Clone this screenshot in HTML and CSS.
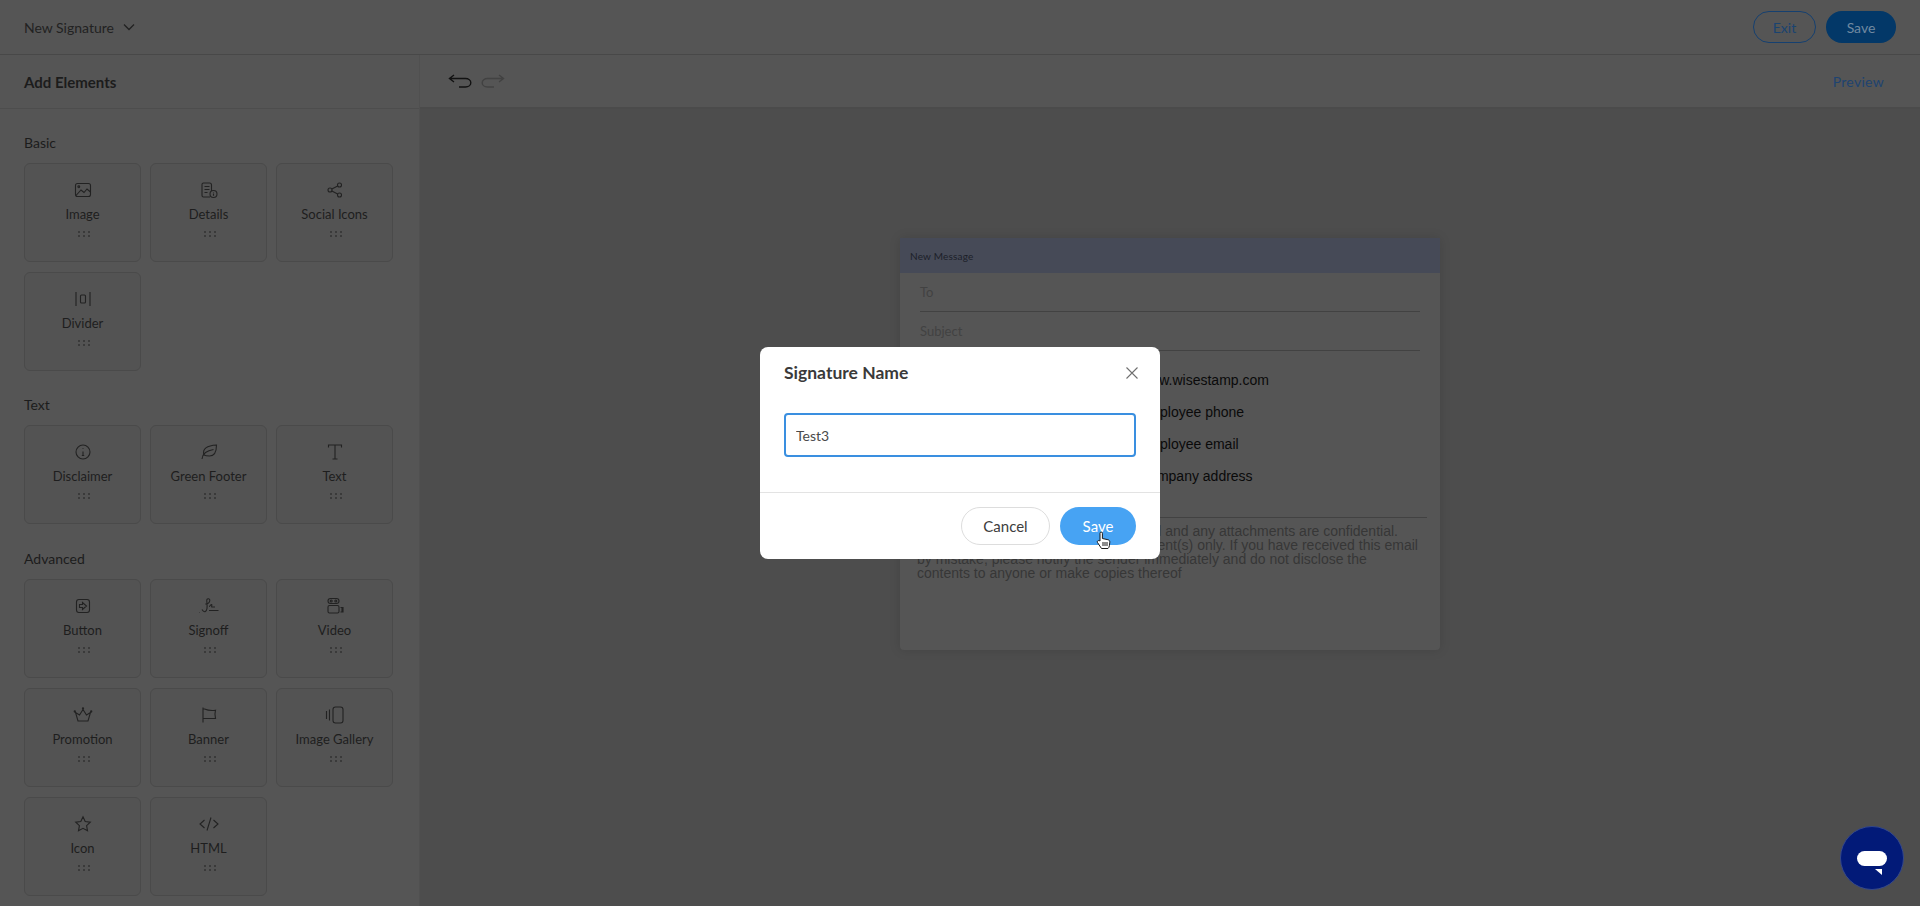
FILE: index.html
```html
<!DOCTYPE html>
<html lang="en">
<head>
  <meta charset="UTF-8" />
  <title>New Signature</title>
  <link rel="stylesheet" href="styles.css">
</head>
<body>

<svg class="defs" width="0" height="0">
  <symbol id="grip" viewBox="0 0 12 6">
    <circle cx="1" cy="1" r="0.8"/><circle cx="6" cy="1" r="0.8"/><circle cx="11" cy="1" r="0.8"/>
    <circle cx="1" cy="5" r="0.8"/><circle cx="6" cy="5" r="0.8"/><circle cx="11" cy="5" r="0.8"/>
  </symbol>
</svg>

<header class="topbar">
  <div class="doc-name">
    New Signature
    <svg width="12" height="8" viewBox="0 0 12 8"><path d="M1 1.500l5 5 5-5"/></svg>
  </div>
  <div class="top-actions">
    <button class="btn-exit">Exit</button>
    <button class="btn-save">Save</button>
  </div>
</header>

<div class="main">

  <aside class="sidebar">
    <div class="sidebar-head">Add Elements</div>

    <section class="group">
      <h3>Basic</h3>
      <div class="cards">
        <div class="card">
          <svg class="ico" viewBox="0 0 20 20"><rect x="2.500" y="3.500" width="15" height="13" rx="2"/><circle cx="5.800" cy="6.800" r="0.900"/><path d="M3 15.500l5-5.500 3 2.500 3-3.500 3.500 3"/></svg>
          <span>Image</span>
          <svg class="grip"><use href="#grip"/></svg>
        </div>
        <div class="card">
          <svg class="ico" viewBox="0 0 20 20"><path d="M11 17H4.500a1.500 1.500 0 0 1-1.500-1.500V4.500A1.500 1.500 0 0 1 4.500 3h6a2 2 0 0 1 2 2v6"/><path d="M5.500 6.500h5M5.500 9.500h5M5.500 12.500h3"/><circle cx="14.500" cy="14" r="3.500"/><path d="M14.500 13.500v2.200M14.500 12v.5"/></svg>
          <span>Details</span>
          <svg class="grip"><use href="#grip"/></svg>
        </div>
        <div class="card">
          <svg class="ico" viewBox="0 0 20 20"><circle cx="14.500" cy="5" r="2"/><circle cx="5" cy="10" r="2"/><circle cx="14.500" cy="15" r="2"/><path d="M6.800 9l5.900-3.100M6.800 11l5.900 3.100"/></svg>
          <span>Social Icons</span>
          <svg class="grip"><use href="#grip"/></svg>
        </div>
        <div class="card">
          <svg class="ico" viewBox="0 0 20 20"><path d="M3 3v14M17 3v14"/><rect x="7.500" y="6" width="5" height="8" rx="1"/></svg>
          <span>Divider</span>
          <svg class="grip"><use href="#grip"/></svg>
        </div>
      </div>
    </section>

    <section class="group">
      <h3>Text</h3>
      <div class="cards">
        <div class="card">
          <svg class="ico" viewBox="0 0 20 20"><circle cx="10" cy="10" r="7"/><path d="M10 9.500v4M8.800 13.500h2.400M10 6.300v.6"/></svg>
          <span>Disclaimer</span>
          <svg class="grip"><use href="#grip"/></svg>
        </div>
        <div class="card">
          <svg class="ico" viewBox="0 0 20 20"><path d="M3 17c.5-3 1.500-5 3.500-6.500s5-2.500 8-3"/><path d="M5 13C3 7 8 3.500 17.500 3c0 7-2.500 11-7 11-2 0-4-.2-5.500-1"/></svg>
          <span>Green Footer</span>
          <svg class="grip"><use href="#grip"/></svg>
        </div>
        <div class="card">
          <svg class="ico" viewBox="0 0 20 20"><path d="M3.500 5.500V3h13v2.500M10 3v14M7.500 17h5"/></svg>
          <span>Text</span>
          <svg class="grip"><use href="#grip"/></svg>
        </div>
      </div>
    </section>

    <section class="group group-advanced">
      <h3>Advanced</h3>
      <div class="cards">
        <div class="card">
          <svg class="ico" viewBox="0 0 20 20"><rect x="3.500" y="3.500" width="13" height="13" rx="2.500"/><path d="M6.500 8.500h3V6.500l4 3.500-4 3.500v-2h-3z"/></svg>
          <span>Button</span>
          <svg class="grip"><use href="#grip"/></svg>
        </div>
        <div class="card">
          <svg class="ico" viewBox="0 0 20 20"><path d="M.5 16.500h.4M3 13.500c2 3.500 4.500 2.500 5-1s-.5-7-.2-8.500c.3-2 3.300-1.500 3 .5-.3 2.500-2 3.500-4.500 3.500"/><path d="M10 10.500c1 0 1.500-2 2.500-2s-.5 2.500.5 2.500h3M10 14.500h9.500"/></svg>
          <span>Signoff</span>
          <svg class="grip"><use href="#grip"/></svg>
        </div>
        <div class="card">
          <svg class="ico" viewBox="0 0 20 20"><rect x="3" y="9.500" width="11" height="7.500" rx="1.500"/><rect x="3" y="2.500" width="11" height="5" rx="2.500"/><circle cx="6.200" cy="5" r="1"/><circle cx="10.800" cy="5" r="1"/><path d="M15.500 11.500h2.500v4.500h-2.500M17 11.500v4.500"/></svg>
          <span>Video</span>
          <svg class="grip"><use href="#grip"/></svg>
        </div>
        <div class="card">
          <svg class="ico" viewBox="0 0 20 20"><path d="M5 16h10l2.500-8.500L13.500 10 10 4.500 6.500 10 2.500 7.500z"/><circle cx="10" cy="3.500" r="0.600"/><circle cx="1.800" cy="6.500" r="0.600"/><circle cx="18.200" cy="6.500" r="0.600"/></svg>
          <span>Promotion</span>
          <svg class="grip"><use href="#grip"/></svg>
        </div>
        <div class="card">
          <svg class="ico" viewBox="0 0 20 20"><path d="M4 2.500v15M4 4h1.500c3 1.200 7 1.800 11 1.200-.7 2.500-.7 5.800 0 8.300H4z"/></svg>
          <span>Banner</span>
          <svg class="grip"><use href="#grip"/></svg>
        </div>
        <div class="card">
          <svg class="ico" viewBox="0 0 20 20"><rect x="8" y="2" width="10" height="16" rx="2.500"/><path d="M1.500 6v8M4.500 4.500v11"/></svg>
          <span>Image Gallery</span>
          <svg class="grip"><use href="#grip"/></svg>
        </div>
        <div class="card">
          <svg class="ico" viewBox="0 0 20 20"><path d="M10 2.800l2.200 4.700 5.100.7-3.700 3.500.9 5.100L10 14.300l-4.500 2.500.9-5.100-3.700-3.500 5.100-.7z"/></svg>
          <span>Icon</span>
          <svg class="grip"><use href="#grip"/></svg>
        </div>
        <div class="card">
          <svg class="ico" viewBox="0 0 20 20"><path d="M5.500 6L1 10l4.500 4M14.500 6l4.500 4-4.500 4M12 3.500L8 16.500"/></svg>
          <span>HTML</span>
          <svg class="grip"><use href="#grip"/></svg>
        </div>
      </div>
    </section>
  </aside>

  <div class="workspace">
    <div class="toolbar">
      <div class="history">
        <svg width="24" height="14" viewBox="0 0 24 14"><path d="M6 1L1.500 4.500 6 8M1.500 4.500h16a5 4 0 0 1 0 8.500H11"/></svg>
        <svg class="redo" width="24" height="14" viewBox="0 0 24 14"><path d="M18 1l4.500 3.500L18 8M22.500 4.500h-16a5 4 0 0 0 0 8.500H13"/></svg>
      </div>
      <a class="preview">Preview</a>
    </div>

    <div class="canvas">
      <div class="mail">
        <div class="mail-head">New Message</div>
        <div class="mail-body">
          <div class="mail-field">To</div>
          <div class="mail-field">Subject</div>
          <div class="sig-rows">
            <div>www.wisestamp.com</div>
            <div>Employee phone</div>
            <div>Employee email</div>
            <div>Company address</div>
          </div>
          <p class="disclaimer">The information contained in this e-mail and any attachments are confidential.<br>They are intended for the named recipient(s) only. If you have received this email<br>by mistake, please notify the sender immediately and do not disclose the<br>contents to anyone or make copies thereof</p>
        </div>
      </div>
    </div>
  </div>

</div>

<!-- Save dialog -->
<div class="modal-wrap">
  <div class="modal">
    <div class="modal-head">
      <h2>Signature Name</h2>
      <svg class="modal-close" width="14" height="14" viewBox="0 0 14 14"><path d="M1.500 1.500l11 11M12.500 1.500l-11 11"/></svg>
    </div>
    <div class="modal-body">
      <input type="text" value="Test3" />
    </div>
    <div class="modal-foot">
      <button class="btn-cancel">Cancel</button>
      <button class="btn-confirm">Save</button>
    </div>
  </div>
</div>

<svg class="hand" width="15" height="18" viewBox="0 0 15 18"><path d="M4 10V2.300a1.200 1.200 0 0 1 2.400 0V7.500l5.500 1.200c1.300.3 2 1.200 1.900 2.500l-.4 3.500c-.1 1-.6 2.300-1.400 2.800H5.500L1.500 11.500c-.9-1.200.9-2.800 2.500-1.500z"/><path class="hand-lines" d="M7 11v4M9 11v4M11 11v4"/></svg>

<div class="chat-btn">
  <svg width="30" height="24" viewBox="0 0 30 24"><rect width="30" height="15" rx="7.500"/><path d="M18 18h7v6z"/></svg>
</div>

</body>
</html>
```

FILE: styles.css
```css
* { box-sizing: border-box; }
html, body { height: 100%; }
body { margin: 0; overflow: hidden; background: #555; color: #1c1c1c; font-family: Lato, "Noto Sans", sans-serif; font-size: 14px; }
.defs { position: absolute; }

.topbar { height: 55px; display: flex; align-items: center; justify-content: space-between; padding: 0 24px; border-bottom: 1px solid #484848; }
.doc-name { display: flex; align-items: center; gap: 9px; font-size: 14px; color: #222; }
.doc-name svg { fill: none; stroke: #222; stroke-width: 1.3; }
.top-actions { display: flex; gap: 10px; }
.top-actions button { height: 32px; border-radius: 16px; font: inherit; font-size: 14px; }
.btn-exit { width: 63px; background: none; border: 1px solid #154070; color: #194370; }
.btn-save { width: 70px; background: #033868; border: none; color: #7089a0; }

.main { display: flex; height: 851px; }

.sidebar { width: 420px; flex: none; border-right: 1px solid #505050; }
.sidebar-head { height: 54px; display: flex; align-items: center; padding-left: 24px; border-bottom: 1px solid #4d4d4d; font-size: 15px; font-weight: 700; color: #1c1c1c; }

.group { padding: 24px 24px 0; }
.group-advanced { margin-top: 1px; }
.group h3 { margin: 0 0 10px; height: 20px; font-size: 14px; line-height: 20px; font-weight: 400; color: #1c1c1c; }
.cards { display: grid; grid-template-columns: repeat(3, 117px); grid-auto-rows: 99px; gap: 10px 9px; }

.card { display: flex; flex-direction: column; align-items: center; padding-top: 16px; background: #535353; border: 1px solid #4a4a4a; border-radius: 6px; }
.card span { height: 18px; margin-top: 5px; font-size: 13px; line-height: 18px; color: #1e1e1e; white-space: nowrap; }
.ico { width: 20px; height: 20px; flex: none; fill: none; stroke: #222; stroke-width: 1.1; }
.grip { width: 12px; height: 6px; margin: 8px 0 0 3px; fill: #1c1c1c; }

.workspace { flex: 1; display: flex; flex-direction: column; background: #4d4d4d; }
.toolbar { height: 54px; display: flex; align-items: center; justify-content: space-between; padding: 0 36px 0 28px; background: #555; border-bottom: 2px solid #4b4b4b; }
.history { display: flex; gap: 9px; }
.history svg { fill: none; stroke: #121212; stroke-width: 1.4; }
.history .redo { stroke: #424242; }
.preview { font-size: 14px; letter-spacing: 0.3px; color: #1e4370; }

.canvas { flex: 1; padding-top: 129px; display: flex; justify-content: center; }
.mail { width: 540px; height: 412px; background: #555; border-radius: 4px; box-shadow: 0 0 12px rgba(0, 0, 0, 0.12); }
.mail-head { height: 35px; display: flex; align-items: center; padding-left: 10px; background: #464a57; font-size: 10px; letter-spacing: 0.2px; color: #1c1f29; }
.mail-body { padding: 0 20px; }
.mail-field { height: 39px; padding-top: 11px; border-bottom: 1px solid #424242; font-size: 13px; line-height: 16px; color: #424242; }
.sig-rows { height: 167px; margin-right: -7px; padding: 13px 0 0 219px; border-bottom: 1px solid #424242; font-family: "Liberation Sans", sans-serif; font-size: 14px; line-height: 32px; color: #0a0a0a; }
.disclaimer { margin: 6px 0 0 -3px; font-family: "Liberation Sans", sans-serif; font-size: 14px; line-height: 14px; white-space: nowrap; color: #373737; }

.modal-wrap { position: fixed; inset: 0; display: flex; align-items: center; justify-content: center; }
.modal { width: 400px; height: 212px; background: #fff; border-radius: 8px; }
.modal-head { height: 66px; display: flex; align-items: flex-start; justify-content: space-between; padding: 16px 21px 0 24px; }
.modal-head h2 { margin: 0; font-size: 17.500px; line-height: 20px; font-weight: 700; color: #3a3a3a; }
.modal-close { margin-top: 3px; fill: none; stroke: #6f6f6f; stroke-width: 1.1; }
.modal-body { height: 80px; padding: 0 24px; border-bottom: 1px solid #e3e3e3; }
.modal-body input { width: 100%; height: 44px; padding: 0 10px; border: 2px solid #3a8fe0; border-radius: 4px; outline: none; font: inherit; font-size: 14px; color: #4a4a4a; }
.modal-foot { display: flex; justify-content: flex-end; gap: 10px; padding: 14px 24px 0; }
.modal-foot button { height: 38px; border-radius: 19px; font: inherit; font-size: 15px; }
.btn-cancel { width: 89px; background: #fff; border: 1px solid #ddd; color: #3d3d3d; }
.btn-confirm { width: 76px; background: #47a3f3; border: none; color: #fff; }

.hand { position: fixed; left: 1096px; top: 531px; fill: #fff; stroke: #1b1b1b; stroke-width: 1; }
.hand-lines { fill: none; }

.chat-btn { position: fixed; left: 1840px; top: 826px; width: 64px; height: 64px; display: flex; align-items: center; justify-content: center; padding-top: 10px; background: #021a78; border: 1px solid #33478c; border-radius: 50%; }
.chat-btn svg { fill: #fff; }
```
